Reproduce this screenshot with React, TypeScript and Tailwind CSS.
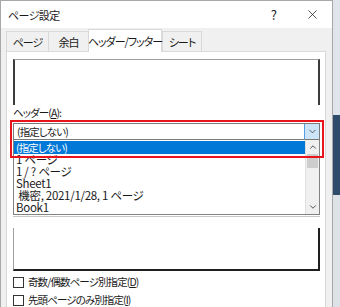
import { ChevronDown, ChevronUp, X } from 'lucide-react';

const font = { fontFamily: '"Noto Sans CJK JP", "Noto Sans", sans-serif' };

const tabs = ['ページ', '余白', 'ヘッダー/フッター', 'シート'];
const tabWidths = ['w-[43px]', 'w-[41px]', 'w-[74px]', 'w-[40px]'];

const items = ['1 ページ', '1 / ? ページ', 'Sheet1', ' 機密, 2021/1/28, 1 ページ', 'Book1'];

// Japanese UI text: narrow like Yu Gothic UI
const jp = 'text-[10.5px] tracking-[-0.9px]';

export default function App() {
  return (
    <div
      className="flex w-[340px] h-[307px] overflow-hidden text-[#1a1a1a] [font-feature-settings:'palt'] whitespace-nowrap"
      style={font}
    >
      {/* dialog */}
      <div className="flex flex-col w-[333px] h-full border-r border-t border-l border-[#a8a8a8] bg-[#f0f0f0]">
        {/* title bar */}
        <div className="flex items-center h-[27px] shrink-0 bg-white pl-[7px] leading-[14px]">
          <span className="text-[11px] tracking-[-0.6px]">ページ設定</span>
          <span className="ml-auto mr-[28px] text-[13px]">?</span>
          <X className="mr-[12px]" size={15} strokeWidth={1.2} />
        </div>

        {/* tabs */}
        <div className="flex items-end h-[23px] pl-[5px] shrink-0 text-[11px] tracking-[-1px] leading-[14px]">
          {tabs.map((t, i) =>
            i === 2 ? (
              <div
                key={t}
                className={`${tabWidths[i]} shrink-0 h-[23px] -mb-px z-10 flex items-center justify-center bg-white border border-b-0 border-[#d9d9d9]`}
              >
                {t}
              </div>
            ) : (
              <div
                key={t}
                className={`${tabWidths[i]} shrink-0 h-[20px] flex items-center justify-center border border-b-0 border-[#d9d9d9] -mr-px`}
              >
                {t}
              </div>
            )
          )}
        </div>

        {/* panel */}
        <div className="relative flex-1 ml-[5px] mr-[6px] bg-white border border-[#d9d9d9] pl-[6px] pr-[5px] pt-[7px] text-[12px]">
          {/* header preview */}
          <div className="h-[46px] border-t border-t-[#a0a0a0] border-x-2 border-x-[#3c3c3c]" />

          <div className={`mt-[1px] h-[13px] leading-[13px] ${jp}`}>
            ヘッダー(<span className="underline">A</span>):
          </div>

          {/* combo */}
          <div className="mt-[4px] flex h-[17px] border border-[#7a7a7a] bg-white">
            <div className={`flex-1 pl-[3px] leading-[15px] ${jp}`}>(指定しない)</div>
            <div className="w-[15px] flex items-center justify-center bg-[#cce4f7] border-l border-[#569de5]">
              <ChevronDown size={11} strokeWidth={1.6} className="text-[#333]" />
            </div>
          </div>

          {/* dropdown list */}
          <div className="flex h-[75px] border border-[#828282] border-t-0 bg-white">
            <div className="flex-1 overflow-hidden">
              <div className={`mt-px h-[13px] bg-[#0078d7] text-white pl-[2px] leading-[13px] ${jp}`}>(指定しない)</div>
              <div className="-mt-px">
                {items.map((it) => (
                  <div key={it} className="h-[12px] pl-[2px] leading-[12px] text-[11.5px] tracking-[-0.3px] whitespace-pre">
                    {it}
                  </div>
                ))}
              </div>
            </div>
            <div className="w-[14px] flex flex-col bg-[#f0f0f0] border-l border-[#e0e0e0]">
              <div className="h-[14px] flex items-center justify-center">
                <ChevronUp size={10} strokeWidth={2.4} className="text-[#555]" />
              </div>
              <div className="h-[14px] bg-[#cdcdcd] mx-px" />
              <div className="flex-1" />
              <div className="h-[14px] flex items-center justify-center">
                <ChevronDown size={10} strokeWidth={2.4} className="text-[#555]" />
              </div>
            </div>
          </div>
          <div className="h-[2px] border-b border-[#c8c8c8]" />

          {/* footer preview */}
          <div className="mt-[11px] h-[43px] border-l border-l-[#a0a0a0] border-r-2 border-b-2 border-r-[#1f1f1f] border-b-[#1f1f1f]" />

          {/* checkboxes */}
          <div className="mt-[3px] flex items-center gap-[4px] h-[16px] leading-[16px]">
            <div className="w-[11px] h-[11px] border border-[#333] bg-white" />
            <span className={jp}>
              奇数/偶数ページ別指定(<span className="underline">D</span>)
            </span>
          </div>
          <div className="mt-[2px] flex items-center gap-[4px] h-[16px] leading-[16px]">
            <div className="w-[11px] h-[11px] border border-[#333] bg-white" />
            <span className={jp}>
              先頭ページのみ別指定(<span className="underline">I</span>)
            </span>
          </div>

          {/* red highlight */}
          <div className="absolute left-[3px] top-[68px] w-[314px] h-[38px] border-2 border-[#e8141c] pointer-events-none" />
        </div>
      </div>

      {/* desktop behind */}
      <div className="flex flex-col flex-1">
        <div className="h-[115px] bg-[#dfe5ea]" />
        <div className="h-[80px] bg-[#2f4d6b]" />
        <div className="flex-1 bg-[#dde2e7]" />
      </div>
    </div>
  );
}
